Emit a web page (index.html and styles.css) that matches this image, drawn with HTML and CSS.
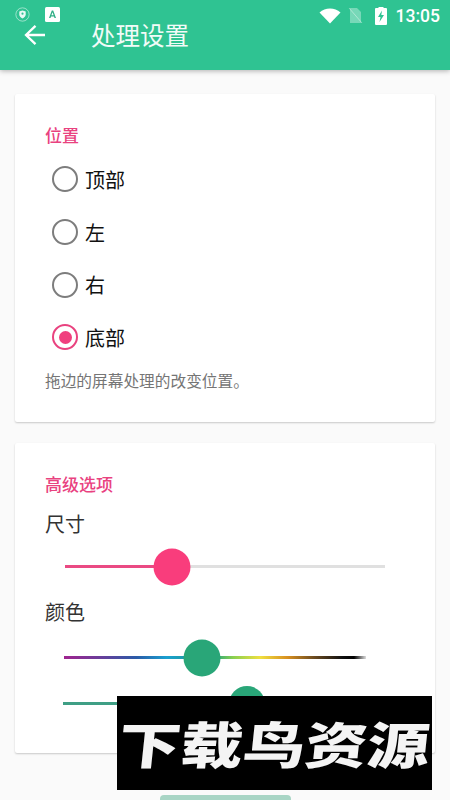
FILE: index.html
```html
<!DOCTYPE html>
<html lang="zh">
<head>
<meta charset="utf-8">
<title>处理设置</title>
<link rel="stylesheet" href="styles.css">
</head>
<body>
<div class="screen">
  <header class="appbar">
    <div class="status">
      <div class="status-left">
        <svg class="ic-shield" width="15" height="15" viewBox="0 0 14 14"><circle cx="7" cy="7" r="6.2" fill="none" stroke="#fff" stroke-width="0.8" opacity=".6"/><path d="M7 3.2l3 1.1v2.4c0 1.900-1.300 3.300-3 4-1.700-.7-3-2.100-3-4V4.300z" fill="#fff" opacity=".9"/><circle cx="7" cy="6.200" r="1" fill="#2fc392"/></svg>
        <svg class="ic-a" width="15" height="15" viewBox="0 0 15 15"><rect width="15" height="15" rx="1.500" fill="#fff"/><path d="M4 11L6.800 3.500h1.400L11 11H9.500L9 9.500H6L5.500 11zM6.400 8.300h2.200L7.500 5.200z" fill="#2fae85"/></svg>
      </div>
      <div class="status-right">
        <svg width="22" height="16" viewBox="0 0 22 16"><path d="M0.500 4.500C3.500 1.800 7 .5 11 .5s7.500 1.300 10.500 4L11 15.500z" fill="#fff"/></svg>
        <svg class="ic-sim" width="15" height="17" viewBox="0 0 15 17"><path d="M2 1h7l4 4v11H2z" fill="#fff" opacity=".35"/><path d="M1 1l13 15" stroke="#fff" stroke-width="1" opacity=".4"/></svg>
        <svg class="ic-bat" width="12" height="18" viewBox="0 0 12 18"><path d="M3.500 1V0h5v1H11a1 1 0 0 1 1 1v15a1 1 0 0 1-1 1H1a1 1 0 0 1-1-1V2a1 1 0 0 1 1-1z" fill="#fff"/><path d="M7 3.500L3 10h2.500L4.500 15 9 8H6.300z" fill="#2fc392"/></svg>
        <span class="clock">13:05</span>
      </div>
    </div>
    <div class="toolbar">
      <svg class="back" width="24" height="24" viewBox="0 0 24 24"><path d="M22 12H3.500M12.500 2.800L3 12l9.500 9.200" fill="none" stroke="#fff" stroke-width="2.300"/></svg>
      <h1 class="title">处理设置</h1>
    </div>
  </header>

  <main class="content">
    <section class="card card-pos">
      <h2 class="heading">位置</h2>
      <div class="radios">
        <div class="radio"><span class="mark"></span><span class="label">顶部</span></div>
        <div class="radio"><span class="mark"></span><span class="label">左</span></div>
        <div class="radio"><span class="mark"></span><span class="label">右</span></div>
        <div class="radio on"><span class="mark"></span><span class="label">底部</span></div>
      </div>
      <p class="hint">拖边的屏幕处理的改变位置。</p>
    </section>

    <section class="card card-adv">
      <h2 class="heading">高级选项</h2>
      <div class="field">尺寸</div>
      <div class="slider size"><span class="thumb"></span></div>
      <div class="field color">颜色</div>
      <div class="slider hue"><span class="thumb"></span></div>
      <div class="slider tone"><span class="thumb"></span></div>
    </section>
  </main>

  <div class="fab"></div>
  <div class="stamp"><span class="stamp-text">下载鸟资源</span></div>
</div>
</body>
</html>
```
FILE: styles.css
```css
* { box-sizing: border-box; }
html, body { margin: 0; padding: 0; }
body { font-family: "Noto Sans CJK SC", "Noto Sans", sans-serif; background: #fafafa; }
.screen { position: relative; width: 450px; height: 800px; overflow: hidden; background: #fafafa; }

.appbar { height: 70px; background: #2fc392; box-shadow: 0 1px 5px rgba(0,0,0,.3); color: #fff; position: relative; }
.status { height: 25px; display: flex; justify-content: space-between; align-items: center; padding: 4px 10px 0 15px; }
.status-left { display: flex; align-items: center; gap: 15px; margin-top: 0; }
.status-right { display: flex; align-items: center; margin-top: 2px; }
.ic-sim { margin-left: 7px; }
.ic-bat { margin-left: 12px; }
.clock { font-family: Roboto, sans-serif; font-size: 17.500px; font-weight: 500; margin-left: 9px; color: #fff; }

.toolbar { display: flex; align-items: center; padding-left: 23px; margin-top: -3px; height: 26px; }
.back { flex: none; }
.title { margin: 0 0 0 44px; font-size: 24.500px; font-weight: 400; line-height: 26px; color: #f2fbf8; }

.content { padding: 24px 15px 0; display: flex; flex-direction: column; gap: 21px; }
.card { background: #fff; border-radius: 2px; box-shadow: 0 1px 2px rgba(0,0,0,.2); padding: 29px 30px; }
.card-pos { height: 328px; }
.card-adv { height: 310px; }
.heading { margin: 0; font-size: 17px; font-weight: 500; line-height: 24px; color: #e9427f; }

.radios { display: flex; flex-direction: column; margin-top: 6px; margin-left: 7px; }
.radio { display: flex; align-items: center; height: 52.700px; }
.mark { width: 26px; height: 26px; border-radius: 50%; border: 2.500px solid #7d7d7d; flex: none; display: flex; align-items: center; justify-content: center; }
.label { margin-left: 7px; font-size: 20px; color: #111; }
.radio.on .mark { border-color: #e9427f; }
.radio.on .mark::after { content: ""; width: 13px; height: 13px; border-radius: 50%; background: #f03f7e; }
.hint { margin: 5px 0 0; font-size: 15.700px; line-height: 24px; color: #757575; }

.field { font-size: 20px; line-height: 28px; color: #333; margin-top: 14px; }
.field.color { margin-top: 30px; }
.slider { position: relative; height: 3px; margin-left: 20px; width: 320px; background: #e0e0e0; }
.thumb { position: absolute; top: 50%; width: 37px; height: 37px; border-radius: 50%; transform: translate(-50%, -50%); }
.size { margin-top: 27px; background: linear-gradient(to right, #ea4a83 0 107px, #e0e0e0 107px); }
.size .thumb { left: 107px; background: #f93d7c; }
.hue { margin-top: 30px; margin-left: 19px; width: 302px; background: linear-gradient(to right, #a0248f 0, #6a3d9a 12%, #2a5ba8 24%, #1aa0d0 34%, #1f9a8c 45%, #2aa67a 50%, #8ad050 56%, #f0e040 65%, #d89020 74%, #6a4a20 83%, #111 92%, #000 96%, #ddd 100%); }
.hue .thumb { left: 138px; background: #29a678; }
.tone { margin-top: 43px; margin-left: 18px; width: 300px; background: linear-gradient(to right, #3f9f85 0 184px, #e0e0e0 184px); }
.tone .thumb { left: 184px; background: #29a678; width: 36px; height: 36px; }

.fab { position: absolute; left: 160px; top: 795px; width: 131px; height: 12px; border-radius: 4px; background: #a8d5c5; }
.stamp { position: absolute; left: 117px; top: 696px; width: 315px; height: 94px; background: #000; color: #f4f4f4; font-size: 61px; font-weight: 900; line-height: 94px; text-align: center; white-space: nowrap; }
.stamp-text { display: inline-block; transform: skewX(-6deg) scale(1.02, .82); }
```
